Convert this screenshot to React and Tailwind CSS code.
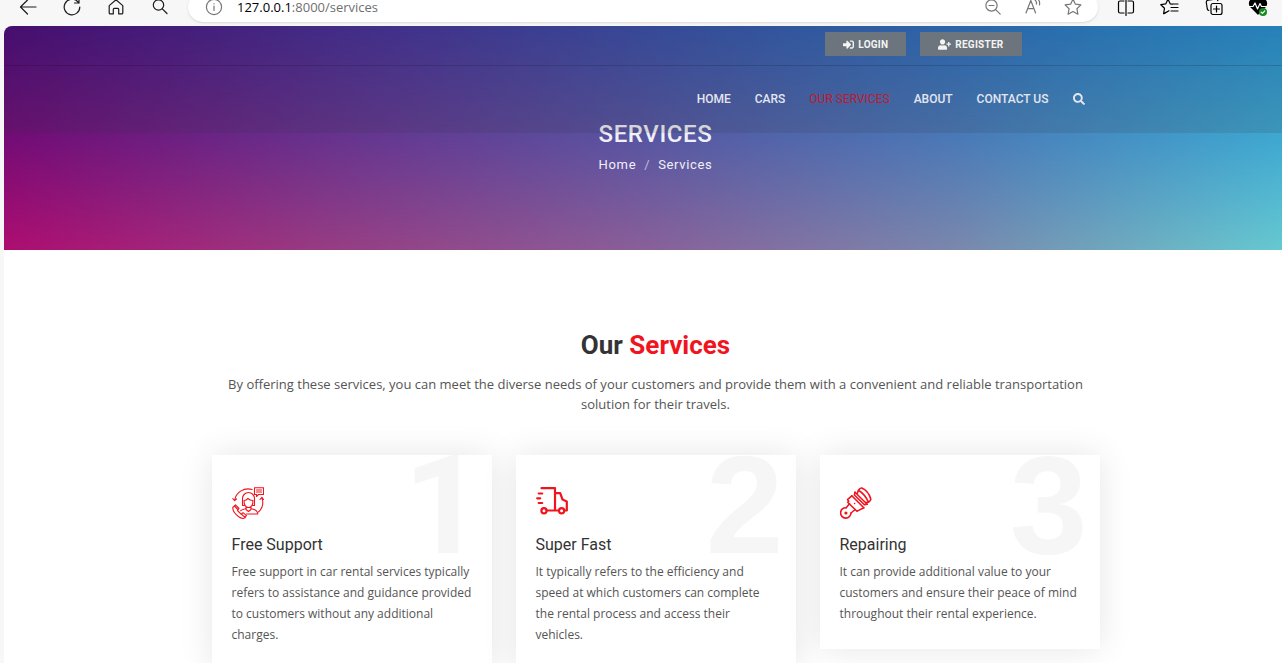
import React from "react";
import { FaSignInAlt, FaUserPlus, FaSearch } from "react-icons/fa";

function Icon({ size = "size-5", children, width = 1.2, ...rest }) {
  return (
    <svg
      viewBox="0 0 20 20"
      className={size}
      fill="none"
      stroke="currentColor"
      strokeWidth={width}
      strokeLinecap="round"
      strokeLinejoin="round"
      aria-hidden="true"
      {...rest}
    >
      {children}
    </svg>
  );
}

const STAR = "M10 2.2l2.4 5 5.5.7-4 3.8 1 5.5-4.9-2.7-4.9 2.7 1-5.5-4-3.8 5.5-.7z";

function ToolButton({ label, children }) {
  return (
    <button type="button" aria-label={label} className="flex size-5 items-center justify-center">
      {children}
    </button>
  );
}

function BrowserBar() {
  return (
    <div className="flex h-[26px] shrink-0 items-end overflow-hidden bg-[#f7f7f7] text-[#1b1b1b]">
      <div className="mb-1 flex h-[30px] w-[188px] shrink-0 items-center gap-6 pl-[18px]">
        <ToolButton label="Back">
          <Icon><path d="M18 10H2.5M9.5 3L2.5 10l7 7" /></Icon>
        </ToolButton>
        <ToolButton label="Refresh">
          <Icon><path d="M17.8 10a7.8 7.8 0 1 1-2.6-5.8L17 6M17 1.500V6h-4.500" /></Icon>
        </ToolButton>
        <ToolButton label="Home">
          <Icon><path d="M3.200 8.600L10 2.800l6.800 5.800v7.300a1 1 0 0 1-1 1h-3.100v-4.600a1 1 0 0 0-1-1H8.300a1 1 0 0 0-1 1v4.600H4.200a1 1 0 0 1-1-1z" /></Icon>
        </ToolButton>
        <ToolButton label="Search">
          <Icon><circle cx="8.500" cy="8" r="5.200" /><path d="M12.300 11.800l4.700 4.700" /></Icon>
        </ToolButton>
      </div>
      <div className="mb-1 flex h-[30px] min-w-0 flex-1 items-center rounded-full bg-white pl-4 pr-[15px] shadow-sm">
        <Icon size="size-5 shrink-0 text-[#767676]">
          <circle cx="10" cy="10" r="7.600" />
          <path d="M10 9v4.500M10 6.500v.3" />
        </Icon>
        <a href="#services" className="ml-[13px] flex-1 truncate font-['Open_Sans',sans-serif] text-[13px] leading-5 text-[#6f6f6f]">
          <span className="text-black">127.0.0.1</span>:8000/services
        </a>
        <div className="flex shrink-0 gap-5 text-[#767676]">
          <ToolButton label="Zoom out">
            <Icon><circle cx="8.500" cy="8.500" r="5.600" /><path d="M12.600 12.600l4.600 4.600M6 8.500h5" /></Icon>
          </ToolButton>
          <ToolButton label="Read aloud">
            <Icon><path d="M3 16L7.800 3.500 12.600 16M4.700 11.700h6.200M12.200 3.200a4 4 0 0 1 1.200 4M14.500 1.500a7 7 0 0 1 2 6.300" /></Icon>
          </ToolButton>
          <ToolButton label="Add to favorites">
            <Icon><path d={STAR} /></Icon>
          </ToolButton>
        </div>
      </div>
      <div className="mb-1 flex h-[30px] shrink-0 items-center gap-6 pl-[18px] pr-[14px] text-black">
        <ToolButton label="Split screen">
          <Icon><path d="M8 4H4a1.500 1.500 0 0 0-1.500 1.500v9A1.500 1.500 0 0 0 4 16h4M12 4h4a1.500 1.500 0 0 1 1.500 1.500v9A1.500 1.500 0 0 1 16 16h-4M10 1.500v17" /></Icon>
        </ToolButton>
        <ToolButton label="Favorites">
          <Icon><path d="M12.500 7.200L10.300 6.900 8 2.200 5.700 6.900.800 7.700l3.700 3.600-.9 5.300 3.600-1.900M11 7h7M11 10.500h7M11 14h7M4 16.700l5-3" /></Icon>
        </ToolButton>
        <ToolButton label="Collections">
          <Icon>
            <rect x="7" y="6.500" width="11" height="11" rx="2" />
            <path d="M12.500 9v6M9.500 12h6M4.800 13.500A2.500 2.500 0 0 1 3.300 12L2.300 5.500A2 2 0 0 1 4 3.200l7.500-1.100a2 2 0 0 1 2.300 1.600" />
          </Icon>
        </ToolButton>
        <ToolButton label="Browser essentials">
          <Icon>
            <path d="M10 17L2.500 9.500a4.600 4.600 0 0 1 7.500-6 4.600 4.600 0 0 1 7.500 6z" fill="black" />
            <path d="M1 9.500h4L7 6l2.500 6 2.500-5.500 1.500 3H19" stroke="white" />
            <circle cx="15" cy="15" r="4" fill="#128a1e" stroke="none" />
            <path d="M13.200 15.200l1.300 1.200 2.300-2.500" stroke="white" />
          </Icon>
        </ToolButton>
      </div>
    </div>
  );
}

const LINKS = ["Home", "Cars", "Our Services", "About", "Contact Us"];

function SiteHeader() {
  return (
    <header className="z-10 col-start-1 row-start-1 self-start bg-[#333333]/15 pl-[25px]">
      <div className="-ml-[25px] border-b border-black/15 pl-[25px]">
        <div className="mx-auto flex h-[39px] max-w-[888px] items-start justify-end gap-3.5 pr-[78px] pt-1.5">
          <a href="#login" className="flex h-6 items-center gap-1 rounded-[1px] bg-[#6c757d] px-[18px] text-[10px] font-bold tracking-wide text-[#f4f4f4]">
            <FaSignInAlt className="size-[11px]" />
            LOGIN
          </a>
          <a href="#register" className="flex h-6 items-center gap-1 rounded-[1px] bg-[#6c757d] px-[18px] text-[10px] font-bold tracking-wide text-[#f4f4f4]">
            <FaUserPlus className="size-[13px]" />
            REGISTER
          </a>
        </div>
      </div>
      <nav className="mx-auto flex h-[67px] max-w-[888px] items-center justify-end gap-6 pb-0.5 pr-[15px] text-[12px] font-medium uppercase text-[#e3e6ef]">
        {LINKS.map((link) => (
          <a
            key={link}
            href={"#" + link.toLowerCase().replace(" ", "-")}
            className={link === "Our Services" ? "font-normal text-[#c01a30]" : ""}
          >
            {link}
          </a>
        ))}
        <button type="button" aria-label="Search the site">
          <FaSearch className="size-3" />
        </button>
      </nav>
    </header>
  );
}

function Hero() {
  return (
    <div className="grid h-56 font-[Roboto,sans-serif]">
      <div className="col-start-1 row-start-1 bg-[linear-gradient(98deg,#41087a_0%,#3f309a_30%,#3155ac_55%,#2870c0_75%,#2493d2_100%)]" />
      <div className="col-start-1 row-start-1 bg-[linear-gradient(90deg,#ac0d70_0%,#983c82_25%,#8c6098_50%,#7f8aab_75%,#6cced0_100%)] [mask-image:linear-gradient(181deg,transparent_0%,rgba(0,0,0,0.4)_48%,black_98%)]" />
      <div className="z-0 col-start-1 row-start-1 pl-[25px] pt-[93px] text-center text-[#f0f0f6]">
        <h1 className="text-[24px] font-medium leading-[30px] tracking-wide">SERVICES</h1>
        <nav aria-label="Breadcrumb" className="mt-1.5 flex justify-center gap-2 text-[13px] leading-5 tracking-wider">
          <a href="#home">Home</a>
          <span className="text-white/60">/</span>
          <span>Services</span>
        </nav>
      </div>
      <SiteHeader />
    </div>
  );
}

function SupportIcon() {
  return (
    <svg viewBox="0 0 32 32" className="size-8" fill="none" stroke="#f0141e" strokeWidth="1.1" strokeLinejoin="round" strokeLinecap="round" aria-hidden="true">
      <path d="M20 2.500A13.500 13.500 0 0 0 2.700 13M.8 11.500l1.800 2.200 2-1.900" />
      <path d="M30 11a13.500 13.500 0 0 1-3.500 14M28 12.500l1.900-2.200 1.600 2.200" />
      <path d="M22.500.7h9v6.800h-5l-2 2V7.500h-2zM24.500 3h5M24.500 5h5" />
      <path d="M10.500 18.500v-7a6 6 0 0 1 12 0v7h-2M10.500 18.500h2" />
      <path d="M12 13.500c2-.2 3-1 4-2.200 1 1.200 2.500 2 5 2.200 0 4-1.500 7-4.500 7s-4.500-3-4.500-7zM14 20v2.500l2.500 2 2.500-2V20" />
      <path d="M19.500 21.700c4 .7 6.200 2 6.200 5.300H14.500M13.700 21.700c-2.200.4-4 1-5 2" />
      <path d="M.8 20.500l2.700-2.700 3.500 3.700-1.500 2 3.500 3.700 2-1.500 3.500 3-2.600 2.700C8 32 .4 25.500.8 20.500zM2.500 19l3.300 3.500M9.800 27.500l3.500 3.200" />
    </svg>
  );
}

function TruckIcon() {
  return (
    <svg viewBox="0 0 32 32" className="size-8" fill="none" stroke="#f0141e" strokeWidth="2.200" strokeLinejoin="round" strokeLinecap="round" aria-hidden="true">
      <path d="M5.500 1.200h13.500v22.300M19 6.200h5.200l2.300 6.300 4.300 2v9h-2.200M10.500 23.500h12" />
      <path d="M2.700 6.500h3.500M1.200 11.300h3M2.700 16h3.500" />
      <circle cx="8" cy="23.700" r="2.600" />
      <circle cx="25.600" cy="23.700" r="2.600" />
    </svg>
  );
}

function PistonIcon() {
  return (
    <svg viewBox="0 0 32 32" className="size-8" fill="none" stroke="#f0141e" strokeWidth="1.600" strokeLinejoin="round" strokeLinecap="round" aria-hidden="true">
      <path d="M18.500 3.200C19.500 1.700 20.800.8 21.800 1.100c4 1.600 7.400 6 9 10.800.2 1-1 2.300-2.300 3.300-2-4.600-5.500-9.200-10-12z" />
      <path d="M15 5.200L27.200 17.200M11.800 8.800L23.800 20.800" />
      <path d="M15 5.200l-.6 2.800M27.200 17.200l-3 .4M14.400 8l10 9.800" />
      <path d="M11.800 8.800L7.500 12.600l1.200 1.700-1 1M18.500 3.200l-1.300 3.200M28.500 15.200l-2.800.4M7.700 15.300l9.200 8.900M16.900 24.200l1.300-.6 5.600-2.800" />
      <path d="M9.500 16.800l-3.300 3.900M15.200 22.500l-4.200 3.500" />
      <path d="M6.200 20.700a5.200 5.200 0 1 0 4.800 5.300" />
      <circle cx="5.900" cy="26" r="1.600" fill="#f0141e" stroke="none" />
      <circle cx="14.600" cy="16.500" r=".8" fill="#f0141e" stroke="none" />
    </svg>
  );
}

const SERVICES = [
  {
    title: "Free Support",
    icon: SupportIcon,
    digit: "right-2 font-[Roboto,sans-serif]",
    text: "Free support in car rental services typically refers to assistance and guidance provided to customers without any additional charges.",
  },
  {
    title: "Super Fast",
    icon: TruckIcon,
    digit: "right-3 font-['Liberation_Sans',sans-serif]",
    text: "It typically refers to the efficiency and speed at which customers can complete the rental process and access their vehicles.",
  },
  {
    title: "Repairing",
    icon: PistonIcon,
    digit: "right-3 font-['Liberation_Sans',sans-serif]",
    text: "It can provide additional value to your customers and ensure their peace of mind throughout their rental experience.",
  },
];

function ServiceCard({ number, title, text, digit, icon: Picture }) {
  return (
    <article className="relative overflow-hidden bg-white px-5 pb-[25px] pt-8 shadow-[0_0_32px_rgba(0,0,0,0.1)]">
      <span className={"absolute -top-5 text-[140px] font-bold leading-none text-[#f6f6f6] " + digit}>
        {number}
      </span>
      <div className="relative">
        <Picture />
        <h3 className="mt-3.5 font-[Roboto,sans-serif] text-[16px] leading-6 text-[#333]">{title}</h3>
        <p className="mt-1 text-[12px] leading-[21px] text-[#555]">{text}</p>
      </div>
    </article>
  );
}

export default function App() {
  return (
    <div className="flex h-screen flex-col bg-[#f7f7f7] pl-1 font-['Open_Sans',sans-serif]">
      <div className="-ml-1">
        <BrowserBar />
      </div>
      <main className="min-h-0 flex-1 overflow-y-auto rounded-tl-lg bg-white [scrollbar-width:none]">
        <Hero />
        <section className="pb-20 pl-[25px] pt-20">
          <div className="mx-auto max-w-[888px]">
            <h2 className="text-center font-[Roboto,sans-serif] text-[26px] font-bold leading-[30px] text-[#333]">
              Our <span className="text-[#f0141e]">Services</span>
            </h2>
            <p className="mx-auto mt-3.5 max-w-[864px] text-center text-[13px] leading-5 text-[#555]">
              By offering these services, you can meet the diverse needs of your customers and provide them with a
              convenient and reliable transportation solution for their travels.
            </p>
            <div className="mt-[41px] grid grid-cols-3 items-start gap-6">
              {SERVICES.map((service, i) => (
                <ServiceCard key={service.title} number={i + 1} {...service} />
              ))}
            </div>
          </div>
        </section>
      </main>
    </div>
  );
}
